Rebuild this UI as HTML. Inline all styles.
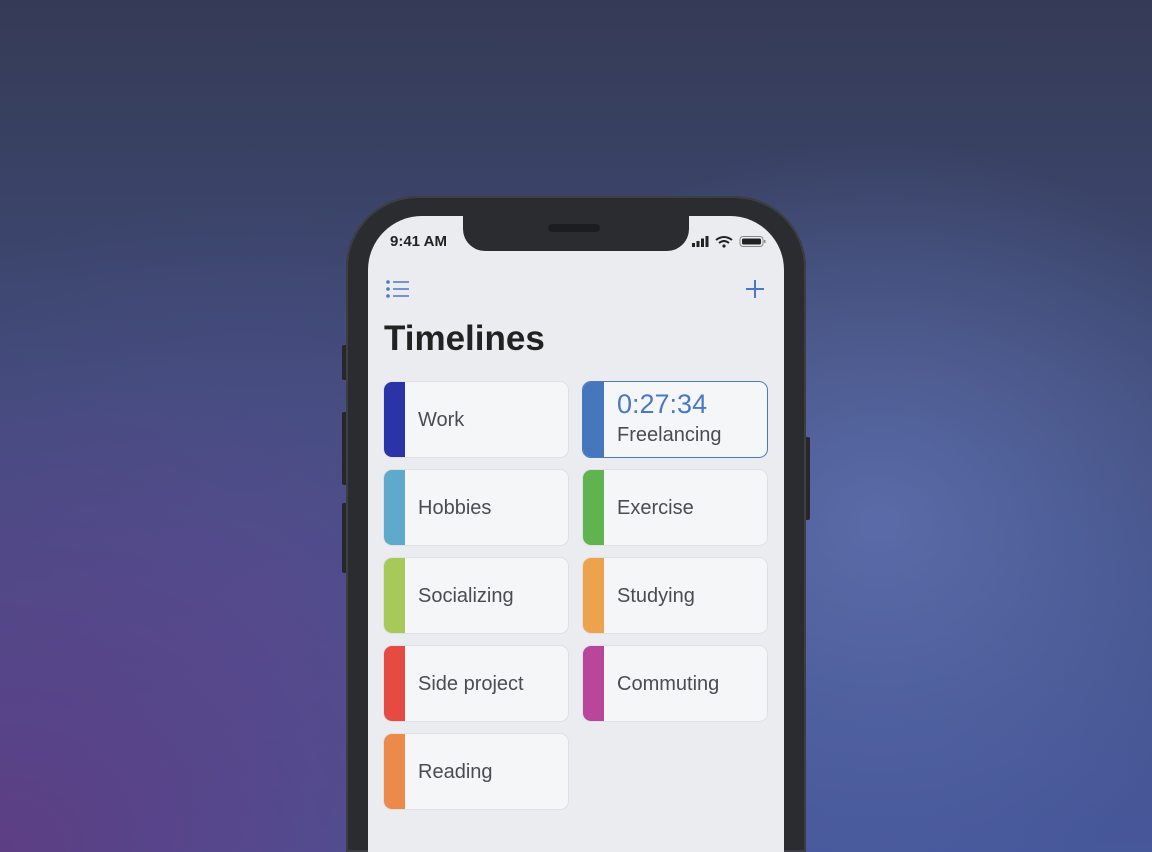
<!DOCTYPE html>
<html style="width:1152px;height:852px;overflow:hidden"><head><style>
*{margin:0;padding:0;box-sizing:border-box}
body{width:1152px;height:852px;overflow:hidden;position:relative;font-family:"Liberation Sans",sans-serif;
background:radial-gradient(ellipse 420px 380px at 880px 520px,rgba(110,130,200,.55),transparent),
radial-gradient(ellipse 600px 500px at 0px 852px,#5d3e84,transparent),
radial-gradient(ellipse 500px 400px at 250px 600px,rgba(90,80,150,.6),transparent),
linear-gradient(180deg,#353b56 0%,#3f4b78 45%,#46579a 100%);}
.btn{position:absolute;background:#26272b;border-radius:2px}
.frame{position:absolute;left:346px;top:196px;width:460px;height:656px;border-radius:72px 72px 0 0;background:#2b2c30;box-shadow:inset 0 0 0 2px #3d3e43}
.screen{position:absolute;left:368px;top:216px;width:416px;height:636px;border-radius:54px 54px 0 0;background:#ebecf0;overflow:hidden}
.notch{position:absolute;left:95px;top:-2px;width:226px;height:37px;background:#2b2c30;border-radius:0 0 22px 22px}
.spk{position:absolute;left:85px;top:10px;width:52px;height:8px;border-radius:4px;background:#1c1d20}
.time{position:absolute;left:22px;top:17px;font-size:15px;font-weight:bold;color:#222}
.card{position:absolute;width:186px;height:77px;border-radius:9px;background:#f5f6f8;border:1px solid #dfe0e4;overflow:hidden}
.card .s{position:absolute;left:0;top:0;bottom:0;width:21px}
.card .t{position:absolute;left:34px;top:27px;font-size:20px;color:#4b4c52}
h1{position:absolute;left:16px;top:103px;font-size:35px;font-weight:bold;color:#222}
</style></head><body>
<div class="btn" style="left:342px;top:345px;width:5px;height:35px"></div>
<div class="btn" style="left:342px;top:412px;width:5px;height:73px"></div>
<div class="btn" style="left:342px;top:503px;width:5px;height:70px"></div>
<div class="btn" style="left:805px;top:437px;width:5px;height:83px"></div>
<div class="frame"></div>
<div class="screen">
<div class="notch"><div class="spk"></div></div>
<div class="time">9:41 AM</div>
<svg style="position:absolute;left:322px;top:19px" width="78" height="14">
<rect x="2" y="8" width="3" height="4" fill="#222"/><rect x="6.5" y="6" width="3" height="6" fill="#222"/><rect x="11" y="3.5" width="3" height="8.5" fill="#222"/><rect x="15.5" y="1" width="3" height="11" fill="#222"/>
<path d="M26 5 Q34 -1 42 5 M29 8 Q34 4 39 8" stroke="#222" stroke-width="2" fill="none"/><circle cx="34" cy="11" r="1.6" fill="#222"/>
<rect x="50" y="1.5" width="23" height="10" rx="3" fill="none" stroke="#888" stroke-width="1"/><rect x="52" y="3.5" width="19" height="6" rx="1.5" fill="#222"/><rect x="74" y="5" width="1.5" height="3" fill="#888"/>
</svg>
<svg style="position:absolute;left:18px;top:63px" width="26" height="20" stroke="#4a78c8" stroke-width="1.6">
<circle cx="2" cy="3" r="1" fill="#4a78c8"/><circle cx="2" cy="10" r="1" fill="#4a78c8"/><circle cx="2" cy="17" r="1" fill="#4a78c8"/>
<path d="M7 3H23M7 10H23M7 17H23"/></svg>
<svg style="position:absolute;left:377px;top:63px" width="20" height="20" stroke="#4a78c8" stroke-width="2"><path d="M10 1V19M1 10H19"/></svg>
<h1>Timelines</h1>
<div class="card" style="left:15px;top:165px"><div class="s" style="background:#2a33a8"></div><div class="t">Work</div></div>
<div class="card" style="left:214px;top:165px;border:1.5px solid #4a78c8"><div class="s" style="background:#4677bd"></div><div class="t" style="top:7px;font-size:27px;color:#4a78c8">0:27:34</div><div class="t" style="top:42px">Freelancing</div></div>
<div class="card" style="left:15px;top:253px"><div class="s" style="background:#5fa9cc"></div><div class="t">Hobbies</div></div>
<div class="card" style="left:214px;top:253px"><div class="s" style="background:#5fb450"></div><div class="t">Exercise</div></div>
<div class="card" style="left:15px;top:341px"><div class="s" style="background:#a6c95a"></div><div class="t">Socializing</div></div>
<div class="card" style="left:214px;top:341px"><div class="s" style="background:#eda24e"></div><div class="t">Studying</div></div>
<div class="card" style="left:15px;top:429px"><div class="s" style="background:#e54b42"></div><div class="t">Side project</div></div>
<div class="card" style="left:214px;top:429px"><div class="s" style="background:#b8469a"></div><div class="t">Commuting</div></div>
<div class="card" style="left:15px;top:517px"><div class="s" style="background:#ec8a4c"></div><div class="t">Reading</div></div>
</div>
</body></html>
